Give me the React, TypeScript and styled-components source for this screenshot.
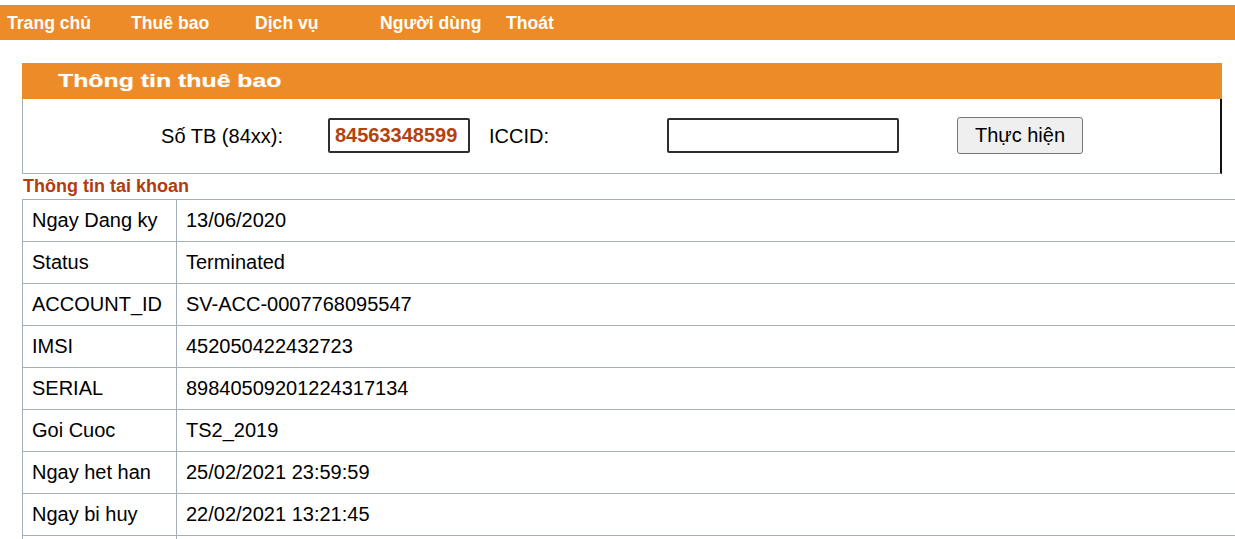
import React from "react"
import styled, {createGlobalStyle} from "styled-components"

const GlobalStyle = createGlobalStyle`
  html, body {
    margin: 0;
    padding: 0;
    overflow: hidden;
    background: #ffffff;
  }
  body {
    font-family: "Liberation Sans", Arial, sans-serif;
    color: #000;
  }
`

const Page = styled.div`
  padding-top: 5px;
  width: 1235px;
`

const NavBar = styled.nav`
  height: 35px;
  background: #ec8b27;
  display: grid;
  grid-template-columns: 124px 124px 125px 126px auto;
  align-items: center;
  padding: 1px 0 0 7px;
  box-sizing: border-box;
`

const NavItem = styled.a`
  color: #ffffff;
  font-weight: bold;
  font-size: 17.6px;
  text-decoration: none;
  white-space: nowrap;
  cursor: pointer;
`

const Panel = styled.section`
  margin: 23px 0 0 22px;
  width: 1200px;
`

const PanelHeader = styled.div`
  height: 36px;
  background: #ec8b27;
  display: flex;
  align-items: center;
  padding-left: 36px;
`

// the title in the original is a stretched banner, so widen the glyphs
const PanelTitle = styled.span`
  display: inline-block;
  color: #ffffff;
  font-weight: bold;
  font-size: 18px;
  transform: scaleX(1.38);
  transform-origin: left center;
  text-shadow: 0 0 1px rgba(255, 255, 255, 0.6);
  white-space: nowrap;
`

const PanelBody = styled.div`
  height: 75px;
  box-sizing: border-box;
  border-left: 1px solid #a6aeb8;
  border-bottom: 1px solid #a6aeb8;
  border-right: 2px solid #111;
  display: flex;
  align-items: center;
  font-size: 20px;
`

type LabelProps = {
    $width: number
    $align?: "left" | "right"
    $pad?: number
}

const FieldLabel = styled.label<LabelProps>`
  width: ${p => p.$width}px;
  text-align: ${p => p.$align || "left"};
  padding-right: ${p => p.$pad || 0}px;
  box-sizing: border-box;
  white-space: nowrap;
`

type InputProps = {
    $width: number
}

const TextInput = styled.input<InputProps>`
  width: ${p => p.$width}px;
  height: 35px;
  margin-top: -2px;
  box-sizing: border-box;
  border: 2px solid #2e2e2e;
  border-radius: 2px;
  padding: 0 5px;
  font-family: "Liberation Sans", Arial, sans-serif;
  font-size: 20px;
  font-weight: bold;
  color: #b5420d;
  outline: none;
`

const Gap = styled.div<InputProps>`
  width: ${p => p.$width}px;
  flex: none;
`

const SubmitButton = styled.button`
  width: 126px;
  height: 37px;
  margin-top: -2px;
  background: #efefef;
  border: 1px solid #767676;
  border-radius: 3px;
  font-family: "Liberation Sans", Arial, sans-serif;
  font-size: 20px;
  color: #000;
  cursor: pointer;
`

const SectionTitle = styled.div`
  margin: 2px 0 0 23px;
  height: 23px;
  font-size: 18px;
  font-weight: bold;
  color: #b23c0b;
`

const InfoTable = styled.table`
  margin-left: 22px;
  width: 1240px;
  border-collapse: collapse;
  font-size: 20px;
`

const Cell = styled.td`
  height: 42px;
  box-sizing: border-box;
  border: 1px solid #a6aeb8;
  padding: 0 0 0 9px;
  vertical-align: middle;
  white-space: nowrap;
`

const LabelCell = styled(Cell)`
  width: 154px;
`

const rows: [string, string][] = [
    ["Ngay Dang ky", "13/06/2020"],
    ["Status", "Terminated"],
    ["ACCOUNT_ID", "SV-ACC-0007768095547"],
    ["IMSI", "452050422432723"],
    ["SERIAL", "89840509201224317134"],
    ["Goi Cuoc", "TS2_2019"],
    ["Ngay het han", "25/02/2021 23:59:59"],
    ["Ngay bi huy", "22/02/2021 13:21:45"],
    ["", ""],
]

const App = () => {
    const navItems = ["Trang chủ", "Thuê bao", "Dịch vụ", "Người dùng", "Thoát"]

    return (
        <>
            <GlobalStyle/>
            <Page>
                <NavBar>
                    {navItems.map((item, i) => <NavItem key={i}>{item}</NavItem>)}
                </NavBar>

                <Panel>
                    <PanelHeader>
                        <PanelTitle>Thông tin thuê bao</PanelTitle>
                    </PanelHeader>
                    <PanelBody>
                        <FieldLabel $width={305} $align="right" $pad={45}>Số TB (84xx):</FieldLabel>
                        <TextInput $width={142} defaultValue="84563348599"/>
                        <Gap $width={19}/>
                        <FieldLabel $width={178}>ICCID:</FieldLabel>
                        <TextInput $width={232} defaultValue=""/>
                        <Gap $width={58}/>
                        <SubmitButton>Thực hiện</SubmitButton>
                    </PanelBody>
                </Panel>

                <SectionTitle>Thông tin tai khoan</SectionTitle>
                <InfoTable>
                    <tbody>
                    {rows.map(([label, value], i) => (
                        <tr key={i}>
                            <LabelCell>{label}</LabelCell>
                            <Cell>{value}</Cell>
                        </tr>
                    ))}
                    </tbody>
                </InfoTable>
            </Page>
        </>
    )
}

export default App
